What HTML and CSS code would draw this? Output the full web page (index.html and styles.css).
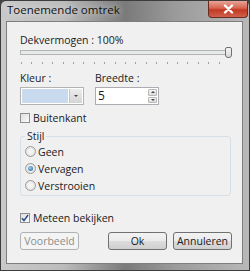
FILE: index.html
```html
<!DOCTYPE html>
<html lang="nl">
<head>
  <meta charset="UTF-8" />
  <title>Toenemende omtrek</title>
  <link rel="stylesheet" href="styles.css">
</head>
<body>

  <div class="window">
    <div class="titlebar">
      <span class="title">Toenemende omtrek</span>
      <button class="close" title="Sluiten">
        <svg width="11" height="10" viewBox="0 0 11 10">
          <path d="M2 1.5 L9 8.5 M9 1.5 L2 8.5" stroke="#fff" stroke-width="2.4" stroke-linecap="round"/>
        </svg>
      </button>
    </div>

    <div class="client">
      <div class="label">Dekvermogen : 100%</div>
      <div class="slider">
        <div class="track"></div>
        <div class="thumb"></div>
      </div>
      <div class="ticks"></div>

      <div class="fields">
        <div class="field">
          <div class="label">Kleur :</div>
          <div class="combo">
            <div class="swatch"></div>
            <div class="drop"><span class="arrow-down"></span></div>
          </div>
        </div>
        <div class="field">
          <div class="label">Breedte :</div>
          <div class="spin">
            <div class="spin-value">5</div>
            <div class="spin-btns">
              <div class="spin-btn"><span class="arrow-up"></span></div>
              <div class="spin-btn"><span class="arrow-down"></span></div>
            </div>
          </div>
        </div>
      </div>

      <label class="check">
        <span class="box"></span>
        Buitenkant
      </label>

      <fieldset class="group">
        <legend>Stijl</legend>
        <label class="radio"><span class="dot"></span>Geen</label>
        <label class="radio"><span class="dot on"></span>Vervagen</label>
        <label class="radio"><span class="dot"></span>Verstrooien</label>
      </fieldset>

      <label class="check preview">
        <span class="box checked">
          <svg width="8" height="8" viewBox="0 0 8 8">
            <path d="M1 4.2 L3 6.6 L7 1" fill="none" stroke="#2a4a8a" stroke-width="1.5"/>
          </svg>
        </span>
        Meteen bekijken
      </label>

      <div class="actions">
        <button class="btn disabled">Voorbeeld</button>
        <div class="right">
          <button class="btn">Ok</button>
          <button class="btn">Annuleren</button>
        </div>
      </div>
    </div>
  </div>

</body>
</html>
```

FILE: styles.css
```css
body {
  margin: 0;
  width: 250px;
  height: 271px;
  overflow: hidden;
  font-family: 'Open Sans', sans-serif;
  font-size: 10.5px;
  color: #1a1a1a;
  background: #444;
}

.window {
  height: 271px;
  box-sizing: border-box;
  display: flex;
  flex-direction: column;
  border: 1px solid #3c3c3c;
  border-radius: 6px 6px 0 0;
  background: linear-gradient(90deg, #c9c9c9 0%, #bcbcbc 25%, #7a7a7a 50%, #9a9a9a 70%, #b8b8b8 100%);
}

.titlebar {
  height: 20px;
  display: flex;
  align-items: flex-start;
  padding-left: 6px;
}

.title {
  font-size: 11.5px;
  line-height: 18px;
  color: #111;
  text-shadow: 0 0 6px rgba(255, 255, 255, 0.8);
}

.close {
  margin-left: auto;
  margin-right: 1px;
  width: 40px;
  height: 17px;
  border: 1px solid #6b2a22;
  border-top: none;
  border-radius: 0 0 4px 4px;
  background: linear-gradient(180deg, #e8a598 0%, #d6634f 45%, #c23a22 55%, #d0614c 100%);
  display: flex;
  align-items: center;
  justify-content: center;
  padding: 0;
}

.client {
  flex: 1;
  margin: 0 6px 6px 5px;
  border: 1px solid #7e7e7e;
  background: #f0f0f0;
  padding: 11px 10px 0 13px;
}

.label {
  line-height: 15px;
  height: 15px;
}

.slider {
  position: relative;
  height: 12px;
  margin-top: -1px;
}

.track {
  position: absolute;
  left: 0;
  right: 0;
  top: 3px;
  height: 3px;
  border: 1px solid #b4b4b4;
  background: #e7eaea;
}

.thumb {
  position: absolute;
  right: 0;
  top: 0;
  width: 5px;
  height: 9px;
  border: 1px solid #707070;
  border-radius: 2px 2px 3px 3px;
  background: linear-gradient(180deg, #f6f6f6, #d8d8d8);
}

.ticks {
  height: 2px;
  margin: 3px 3px 0 1px;
  background: repeating-linear-gradient(90deg, #a0a0a0 0 1px, transparent 1px 10.4px);
}

.fields {
  display: flex;
  gap: 11px;
  margin-top: 7px;
}

.field .label {
  margin-bottom: 1px;
}

.combo {
  width: 64px;
  height: 18px;
  box-sizing: border-box;
  display: flex;
  border: 1px solid #b3b3b3;
  background: #fff;
  padding: 1px;
}

.swatch {
  flex: 1;
  background: #c9d9ee;
}

.drop {
  width: 12px;
  margin-left: 1px;
  background: linear-gradient(180deg, #ededed, #d4d4d4);
  border-left: 1px solid #c4c4c4;
  display: flex;
  align-items: center;
  justify-content: center;
}

.arrow-down,
.arrow-up {
  width: 0;
  height: 0;
  border-left: 2px solid transparent;
  border-right: 2px solid transparent;
}

.arrow-down {
  border-top: 2px solid #444;
}

.arrow-up {
  border-bottom: 2px solid #444;
}

.spin {
  width: 64px;
  height: 18px;
  box-sizing: border-box;
  display: flex;
  border: 1px solid #abadb3;
  background: #fff;
}

.spin-value {
  flex: 1;
  padding-left: 2px;
  font-size: 12px;
  line-height: 16px;
}

.spin-btns {
  width: 9px;
  display: flex;
  flex-direction: column;
  gap: 1px;
  padding: 1px;
}

.spin-btn {
  flex: 1;
  border: 1px solid #b9b9b9;
  border-radius: 1px;
  background: linear-gradient(180deg, #f6f6f6, #dcdcdc);
  display: flex;
  align-items: center;
  justify-content: center;
}

.check {
  display: flex;
  align-items: center;
  gap: 3px;
  height: 15px;
  margin-top: 5px;
}

.box {
  width: 8px;
  height: 8px;
  border: 1px solid #8f8f8f;
  background: linear-gradient(135deg, #dedede, #fbfbfb);
  display: flex;
  align-items: center;
  justify-content: center;
}

.group {
  margin: 5px 0 0 0;
  padding: 0 0 1px 4px;
  width: 211px;
  box-sizing: border-box;
  border: 1px solid #d5dfe5;
  border-radius: 3px;
}

.group legend {
  padding: 0 2px;
  margin-left: 0;
  line-height: 13px;
}

.radio {
  display: flex;
  align-items: center;
  gap: 2px;
  height: 17px;
}

.dot {
  width: 9px;
  height: 9px;
  border: 1px solid #9a9a9a;
  border-radius: 50%;
  background: radial-gradient(circle, #f4f4f4 30%, #d8d8d8 100%);
  display: flex;
  align-items: center;
  justify-content: center;
}

.dot.on::after {
  content: '';
  width: 5px;
  height: 5px;
  border-radius: 50%;
  background: radial-gradient(circle at 40% 40%, #9fd0f0, #1d5d8f);
}

.preview {
  margin-top: 14px;
}

.actions {
  display: flex;
  margin-top: 7px;
  width: 212px;
}

.right {
  margin-left: auto;
  display: flex;
  gap: 6px;
}

.btn {
  width: 59px;
  height: 18px;
  padding: 0;
  font-family: inherit;
  font-size: 10.5px;
  color: #1a1a1a;
  border: 1px solid #707070;
  border-radius: 3px;
  background: linear-gradient(180deg, #f2f2f2 0%, #ebebeb 50%, #dddddd 51%, #cfcfcf 100%);
}

.btn.disabled {
  color: #8c8c8c;
  border-color: #adb2b5;
  background: #f4f4f4;
}
```
